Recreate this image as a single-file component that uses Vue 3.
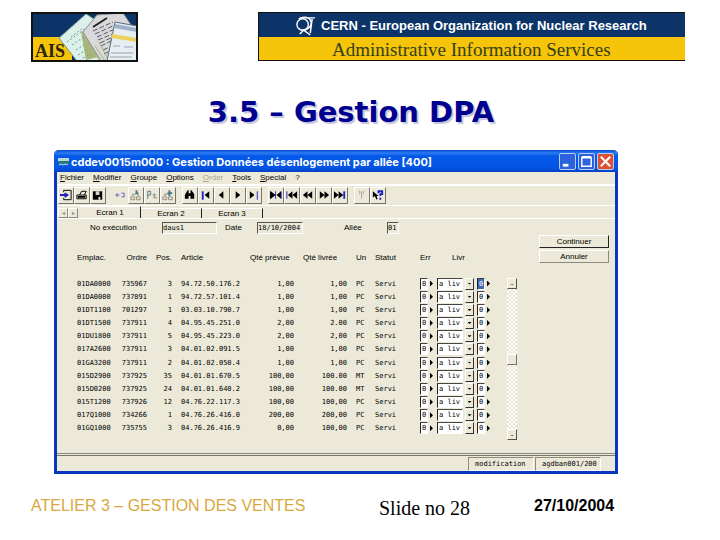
<script setup>
const menus = [
  { key: 'F', rest: 'ichier' },
  { key: 'M', rest: 'odifier' },
  { key: 'G', rest: 'roupe' },
  { key: 'O', rest: 'ptions' },
  { key: 'O', rest: 'rder', off: true },
  { key: 'T', rest: 'ools' },
  { key: 'S', rest: 'pecial' },
  { key: '?', rest: '' },
]

const K = '#000'
const B = '#2020c0'
const G = '#8c8a7c'
const toolGroups = [
  [
    { name: 'Quitter', shapes: [{ d: 'M5 4V2h8v10H5v-2', s: K }, { d: 'M1 7h8M6 5l3 2-3 2', s: B, w: 2 }] },
    { name: 'Imprimer', shapes: [{ d: 'M2 7h10v4H2zM5 7l2-4h5l-2 4', s: K }, { d: 'M3 8h8v2H3z', f: K }] },
    { name: 'Enregistrer', shapes: [{ d: 'M2 3h10v9H2z', f: K }, { d: 'M5 3h4v4H5z', f: '#d8d4c8' }, { d: 'M8 9h2v3H8z', f: '#ece9d8' }] },
  ],
  [
    { name: 'Annuler la saisie', flat: true, shapes: [{ d: 'M5 5L3 7l2 2M3 7h4M9 5h3v4H9', s: '#5a5ac8' }] },
    { name: 'Insérer', shapes: [{ d: 'M2 9h4v3H2zM8 9h4v3H8zM4 8V6h6v2', s: G }, { d: 'M8 2v4M7 5h3', s: '#46788c', w: 2 }] },
    { name: 'Dupliquer', shapes: [{ d: 'M3 11V3h3v4H3', s: '#46788c' }, { d: 'M8 7h4M10 5v5M9 10h4', s: G }] },
    { name: 'Ajouter', shapes: [{ d: 'M2 9h4v3H2zM8 9h4v3H8zM4 8V6h5', s: G }, { d: 'M9 2v6M7 5h5', s: '#46788c', w: 2 }] },
  ],
  [
    { name: 'Rechercher', shapes: [{ d: 'M3 5l2-3h1v3h2V2h1l3 4v5H8V8H6v3H2V7z', f: K }] },
    { name: 'Premier', shapes: [{ d: 'M4 3v9', s: B, w: 2 }, { d: 'M11 3v8L6 7z', f: K }] },
    { name: 'Précédent', shapes: [{ d: 'M9 3v8L4 7z', f: K }] },
    { name: 'Suivant', shapes: [{ d: 'M5 3v8l5-4z', f: K }] },
    { name: 'Dernier', shapes: [{ d: 'M3 3v8l5-4z', f: K }, { d: 'M11 3v9', s: B }] },
  ],
  [
    { name: 'Groupe courant', shapes: [{ d: 'M2 3v8l5-4zM13 3v8L8 7zM1 3h1v8H1z', f: K }, { d: 'M7 3v8', s: B }, { d: 'M13 3v8', s: B }] },
    { name: 'Premier groupe', shapes: [{ d: 'M2 3v8', s: B }, { d: 'M8 3v8L3 7zM13 3v8L8 7z', f: K }] },
    { name: 'Groupe précédent', shapes: [{ d: 'M7 3v8L2 7zM12 3v8L7 7z', f: K }] },
    { name: 'Groupe suivant', shapes: [{ d: 'M3 3v8l5-4zM8 3v8l5-4z', f: K }] },
    { name: 'Dernier groupe', shapes: [{ d: 'M1 3v8l5-4zM6 3v8l5-4z', f: K }, { d: 'M12 3v8', s: B, w: 2 }] },
  ],
  [
    { name: 'Texte', shapes: [{ d: 'M7 3v8M4 3h1v3M10 3H9v3', s: '#a8a594' }] },
    { name: 'Aide', shapes: [{ d: 'M2 3v7l2-2 2 4 1-1-1-3h2z', f: K }, { d: 'M8 5V3h4v3h-2v2M10 10v2', s: B, w: 2 }] },
  ],
]

const tabs = ['Ecran 1', 'Ecran 2', 'Ecran 3']

const rows = [
  ['01DA0000', '735967', '3', '94.72.50.176.2', '1,00', '1,00', 'PC'],
  ['01DA0000', '737891', '1', '94.72.57.101.4', '1,00', '1,00', 'PC'],
  ['01DT1100', '701297', '1', '03.03.10.790.7', '1,00', '1,00', 'PC'],
  ['01DT1500', '737911', '4', '04.95.45.251.0', '2,00', '2.00', 'PC'],
  ['01DU1800', '737911', '5', '04.95.45.223.0', '2,00', '2,00', 'PC'],
  ['017A2600', '737911', '3', '04.01.02.091.5', '1,00', '1,00', 'PC'],
  ['01GA3200', '737911', '2', '04.01.02.050.4', '1,00', '1,00', 'PC'],
  ['015D2900', '737925', '35', '04.01.01.670.5', '100,00', '100.00', 'MT'],
  ['015D0200', '737925', '24', '04.01.01.640.2', '100,00', '100.00', 'MT'],
  ['015T1200', '737926', '12', '04.76.22.117.3', '100,00', '100,00', 'PC'],
  ['017Q1000', '734266', '1', '04.76.26.416.0', '200,00', '200,00', 'PC'],
  ['01GQ1000', '735755', '3', '04.76.26.416.9', '0,00', '100,00', 'PC'],
]
</script>

<template>
  <div class="slide">
    <header class="top">
      <svg class="logo" viewBox="0 0 107 50" role="img" aria-label="AIS">
        <rect width="107" height="50" fill="#0c3468" />
        <path d="M1 25h40v24H1z" fill="#f6c408" />
        <path d="M28 26L55 2l16 10 4 37H46z" fill="#dcf0ea" stroke="#7c9c98" />
        <path d="M50 20l12-3 9 27-16 4z" fill="#a8b67c" />
        <path d="M40 25l12-9M36 30l22-16M41 33l12-8M45 38l8-5M47 43l8-5M52 46l8-4" stroke="#7b9c96" stroke-dasharray="2 2" />
        <path d="M66 3L92 1l8 12-18 36H70L52 20z" fill="#d9d9dc" stroke="#8c9098" />
        <path d="M62 15l14-9" stroke="#222" stroke-width="2" />
        <path d="M62 19l20-9M64 22l20-9M66 25l18-8M67 28l17-7M69 31l13-6M70 34l10-5M72 38l9-4M73 42l8-4" stroke="#555a60" stroke-dasharray="5 2" />
        <path d="M61 38l8 11M64 34l10 15M68 30l10 19" stroke="#a8b67c" />
        <path d="M84 10l22 4v35H76z" fill="#e7eef2" stroke="#5d6c80" />
        <path d="M84 12l22 4v4l-23-4z" fill="#9db0c8" />
        <path d="M81 22l25 4v4l-26-4z" fill="#ead25c" />
        <path d="M82 34h7M93 35h9M80 41h22M79 45h22" stroke="#98a4b0" />
        <text x="4" y="45" class="logo-text">AIS</text>
        <rect x="1" y="1" width="105" height="48" fill="none" stroke="#111" stroke-width="2" />
      </svg>
      <div class="banner">
        <div class="cern">
          <svg class="cern-mark" viewBox="0 0 22 22" fill="none" stroke="#fff" stroke-width="1.5" aria-hidden="true">
            <circle cx="8" cy="10" r="6" />
            <path d="M4 4c5-3 12-2 13 4 0 5-4 7-8 8M5 3h16M18 4l-2 15M8 15l8 6M5 20l4-4" />
          </svg>
          CERN - European Organization for Nuclear Research
        </div>
        <div class="service">Administrative Information Services</div>
      </div>
    </header>

    <h1>3.5 – Gestion DPA</h1>

    <main class="window">
      <div class="titlebar">
        <svg class="app-icon" viewBox="0 0 11 10" aria-hidden="true">
          <path d="M0 1h11v3H0z" fill="#b9d8d4" />
          <path d="M0 4h11v3H0z" fill="#267878" />
          <path d="M1 8l2-1 2 1 3-1 2 1" stroke="#c8d8e8" fill="none" />
        </svg>
        <span class="caption">cddev0015m000 : Gestion Données désenlogement par allée [400]</span>
        <button class="win-btn" aria-label="Réduire"><svg viewBox="0 0 16 16"><path d="M3 12h6" stroke="#fff" stroke-width="3" /></svg></button>
        <button class="win-btn" aria-label="Agrandir"><svg viewBox="0 0 16 16"><path d="M3 4h10v9H3zM3 3h10" stroke="#fff" stroke-width="1.5" fill="none" /></svg></button>
        <button class="win-btn close" aria-label="Fermer"><svg viewBox="0 0 16 16"><path d="M3 3l10 10M13 3L3 13" stroke="#fff" stroke-width="2.2" /></svg></button>
      </div>

      <nav class="menu">
        <button v-for="m in menus" :key="m.key + m.rest" :disabled="m.off"><u v-if="m.rest">{{ m.key }}</u><template v-else>{{ m.key }}</template>{{ m.rest }}</button>
      </nav>

      <div class="toolbar">
        <div v-for="(g, i) in toolGroups" :key="i" class="tool-group">
          <button v-for="t in g" :key="t.name" :aria-label="t.name" :class="{ flat: t.flat }">
            <svg viewBox="0 0 15 15">
              <path v-for="(p, j) in t.shapes" :key="j" :d="p.d" :fill="p.f || 'none'" :stroke="p.s || 'none'" :stroke-width="p.w || 1" />
            </svg>
          </button>
        </div>
      </div>

      <div class="tabs">
        <button class="step" aria-label="Onglet précédent">◂</button>
        <button class="step" aria-label="Onglet suivant">▸</button>
        <button v-for="(t, i) in tabs" :key="t" class="tab" :class="{ active: i === 0 }">{{ t }}</button>
      </div>

      <div class="work">
        <div class="data">
          <div class="form">
            <label for="exec">No exécution</label><input id="exec" class="w-exec" value="daus1" />
            <label for="date">Date</label><input id="date" class="w-date" value="18/10/2004" />
            <label for="aisle">Allée</label><input id="aisle" class="w-aisle" value="01" />
          </div>
          <table>
            <colgroup>
              <col class="c-place" /><col class="c-order" /><col class="c-pos" /><col class="c-item" /><col class="c-plan" />
              <col class="c-done" /><col class="c-unit" /><col class="c-state" /><col class="c-err" /><col class="c-livr" /><col class="c-end" />
            </colgroup>
            <thead>
              <tr>
                <th>Emplac.</th><th class="num">Ordre</th><th class="num">Pos.</th><th class="pad">Article</th><th>Qté prévue</th>
                <th class="pad">Qté livrée</th><th class="pad">Un</th><th>Statut</th><th>Err</th><th class="deep">Livr</th><td></td>
              </tr>
            </thead>
            <tbody>
              <tr v-for="(r, i) in rows" :key="i">
                <td>{{ r[0] }}</td>
                <td class="num">{{ r[1] }}</td>
                <td class="num">{{ r[2] }}</td>
                <td class="pad">{{ r[3] }}</td>
                <td class="num">{{ r[4] }}</td>
                <td class="num">{{ r[5] }}</td>
                <td class="pad">{{ r[6] }}</td>
                <td>Servi</td>
                <td><div class="cell"><input class="digit" value="0" aria-label="Erreur" /><button class="more" aria-label="Détail erreur"></button></div></td>
                <td><div class="cell"><select aria-label="Livraison"><option>a liv</option></select><span class="drop"></span></div></td>
                <td><div class="cell"><input class="digit" :class="{ picked: i === 0 }" value="0" aria-label="Code" /><button class="more" aria-label="Détail code"></button></div></td>
              </tr>
            </tbody>
          </table>
        </div>
        <div class="scroll">
          <button aria-label="Défiler vers le haut">-</button>
          <div class="track"><span class="thumb"></span></div>
          <button aria-label="Défiler vers le bas">-</button>
        </div>
        <div class="actions">
          <button class="primary">Continuer</button>
          <button>Annuler</button>
        </div>
      </div>

      <div class="status">
        <span>modification</span>
        <span>agdban001/200</span>
      </div>
    </main>

    <footer>
      <span class="course">ATELIER 3 – GESTION DES VENTES</span>
      <span class="page">Slide no 28</span>
      <span class="day">27/10/2004</span>
    </footer>
  </div>
</template>

<style>
body {
  background: #fff;
}
</style>

<style scoped>
* {
  box-sizing: border-box;
}
.slide {
  padding: 12px 0;
  font-family: "Liberation Sans", Arial, sans-serif;
  color: #000;
}
button,
input,
select {
  font: inherit;
  color: inherit;
  margin: 0;
  padding: 0;
  border: 0;
  border-radius: 0;
  background: none;
  appearance: none;
}
svg {
  display: block;
}
.top {
  display: flex;
  gap: 120px;
  padding: 0 35px 0 31px;
}
.logo {
  width: 107px;
  height: 50px;
}
.logo-text {
  font: 700 18px "Liberation Serif", serif;
  fill: #2c2410;
}
.banner {
  flex: 1;
  height: 49px;
  border: 1px solid #111;
  border-right: 0;
}
.cern {
  display: flex;
  align-items: center;
  gap: 4px;
  height: 24px;
  padding-left: 35px;
  background: #0c3468;
  color: #fff;
  font-size: 13px;
  font-weight: 700;
  white-space: nowrap;
}
.cern-mark {
  width: 23px;
  height: 21px;
}
.service {
  height: 23px;
  padding-left: 73px;
  background: #f6c408;
  color: #33401c;
  font: 19px/25px "Liberation Serif", serif;
  white-space: nowrap;
}
h1 {
  margin: 32px 0 0;
  padding-right: 18px;
  text-align: center;
  font: 700 29px/36px "DejaVu Sans", Verdana, sans-serif;
  color: #000090;
  text-shadow: 2px 2px 1px #c4c4dc;
}
.window {
  margin: 20px 102px 0 54px;
  border: 3px solid #0a36c0;
  border-top: 0;
  border-radius: 5px 5px 0 0;
  background: #ece9d8;
  font-size: 8px;
  line-height: 10px;
}
.titlebar {
  display: flex;
  align-items: center;
  gap: 2px;
  height: 22px;
  margin: 0 -3px;
  padding: 1px 4px 0;
  border-radius: 5px 5px 0 0;
  background: linear-gradient(#0a48c8, #2a7cf4 3px, #0458e8 6px, #0454e4 18px, #0440c0);
  color: #fff;
  font: 700 11px/20px Inter, "Noto Sans", sans-serif;
}
.app-icon {
  width: 11px;
  height: 10px;
}
.caption {
  flex: 1;
  white-space: nowrap;
}
.win-btn {
  width: 17px;
  height: 17px;
  border: 1px solid #b8ccf4;
  border-radius: 2px;
  background: #2c62dc;
}
.win-btn.close {
  background: #dc5034;
}
.menu {
  display: flex;
  gap: 9px;
  height: 14px;
  padding: 0 3px;
  border-bottom: 2px solid #fff;
}
.menu button:disabled {
  color: #a8a594;
}
.toolbar {
  display: flex;
  gap: 6px;
  height: 20px;
  padding: 1px;
  border-bottom: 1px solid #fff;
}
.tool-group {
  display: flex;
}
.tool-group button {
  width: 16px;
  height: 17px;
  border: 1px solid;
  border-color: #fff #77756a #77756a #fff;
}
.tool-group button.flat {
  border-color: transparent;
}
.tool-group svg {
  width: 14px;
  height: 15px;
}
.tabs {
  display: flex;
  align-items: flex-end;
  height: 13px;
  padding-left: 1px;
  border-bottom: 1px solid #fff;
}
.step {
  width: 10px;
  height: 10px;
  border: 1px solid;
  border-color: #fff #8c8a7c #8c8a7c #fff;
  color: #8c8a7c;
  font-size: 6px;
  line-height: 8px;
}
.tab {
  width: 61px;
  height: 10px;
  border-top: 1px solid #fff;
  border-right: 1px solid #222;
}
.tab.active {
  height: 12px;
  margin-left: 2px;
}
.work {
  display: flex;
  padding: 3px 6px 0 20px;
}
.data {
  flex: none;
  width: 430px;
}
.form {
  display: flex;
  align-items: center;
  height: 12px;
  padding-left: 13px;
}
.form label {
  white-space: nowrap;
}
.form input {
  height: 12px;
  border: 1px solid;
  border-color: #55534a #fff #fff #55534a;
  font: 7px/10px "DejaVu Sans Mono", monospace;
}
label[for="exec"] {
  width: 72px;
}
label[for="date"] {
  width: 32px;
  margin-left: 8px;
}
label[for="aisle"] {
  width: 43px;
  margin-left: 41px;
}
.w-exec {
  width: 55px;
}
.w-date {
  width: 46px;
}
.w-aisle {
  width: 12px;
}
table {
  width: 100%;
  height: 183px;
  margin-top: 18px;
  table-layout: fixed;
  border-collapse: collapse;
  font: 7px/10px "DejaVu Sans Mono", monospace;
}
.c-place { width: 43px; }
.c-order { width: 27px; }
.c-pos { width: 25px; }
.c-item { width: 78px; }
.c-plan { width: 44px; }
.c-done { width: 53px; }
.c-unit { width: 28px; }
.c-state { width: 45px; }
.c-err { width: 17px; }
.c-livr { width: 40px; }
.c-end { width: 30px; }
th,
td {
  padding: 0;
  text-align: left;
  white-space: nowrap;
}
th {
  height: 25px;
  vertical-align: top;
  font: 8px/12px "Liberation Sans", Arial, sans-serif;
}
.num {
  text-align: right;
}
.pad {
  padding-left: 9px;
}
.deep {
  padding-left: 15px;
}
.cell {
  display: flex;
  align-items: center;
}
.digit,
select {
  height: 12px;
  border: 1px solid;
  border-color: #444 #fff #fff #222;
  background: #fff;
  line-height: 10px;
}
.digit {
  width: 8px;
  padding-left: 1px;
}
.digit.picked {
  background: #3c68b0;
  color: #fff;
}
.more {
  width: 3px;
  height: 6px;
  margin-left: 2px;
  background: #000;
  clip-path: polygon(0 0, 100% 50%, 0 100%);
}
select {
  width: 26px;
  padding-left: 1px;
}
.drop {
  display: flex;
  align-items: center;
  justify-content: center;
  width: 9px;
  height: 12px;
  margin-left: 2px;
  border: 1px solid;
  border-color: #fff #333 #333 #fff;
}
.drop::before {
  content: "";
  width: 4px;
  height: 2px;
  background: #000;
  clip-path: polygon(0 0, 100% 0, 50% 100%);
}
.scroll {
  display: flex;
  flex-direction: column;
  width: 10px;
  margin: 56px 0 0;
  height: 162px;
}
.scroll button {
  height: 11px;
  border: 1px solid;
  border-color: #fff #55534a #55534a #fff;
  line-height: 8px;
}
.track {
  display: flex;
  flex: 1;
  align-items: center;
  background: repeating-conic-gradient(#fff 0 25%, #e8e3d4 0 50%) 0 0 / 4px 4px;
}
.thumb {
  width: 10px;
  height: 11px;
  border: 1px solid;
  border-color: #fff #77756a #77756a #fff;
  background: #ece9d8;
}
.actions {
  display: flex;
  flex: 1;
  flex-direction: column;
  gap: 2px;
  padding: 13px 0 0 22px;
}
.actions button {
  height: 13px;
  border: 1px solid;
  border-color: #fff #8c8a7c #8c8a7c #fff;
}
.actions .primary {
  border-color: #fff #222 #222 #fff;
}
.status {
  display: flex;
  justify-content: flex-end;
  gap: 1px;
  height: 18px;
  margin-top: 13px;
  padding: 3px 14px 0 0;
  border-top: 1px solid #8c8a7c;
  background: linear-gradient(transparent 1px, #77756a 1px 2px, transparent 2px);
}
.status span {
  width: 66px;
  padding-left: 6px;
  border: 1px solid;
  border-color: #8c8a7c #fff #fff #8c8a7c;
  font: 7px/12px "DejaVu Sans Mono", monospace;
  white-space: nowrap;
}
footer {
  display: flex;
  align-items: center;
  margin-top: 19px;
  padding: 0 31px;
  white-space: nowrap;
}
.course {
  width: 348px;
  color: #d8a840;
  font-size: 16px;
  line-height: 20px;
}
.page {
  width: 155px;
  padding-top: 4px;
  font: 20px/22px "Liberation Serif", serif;
}
.day {
  font-size: 16px;
  font-weight: 700;
}
</style>
